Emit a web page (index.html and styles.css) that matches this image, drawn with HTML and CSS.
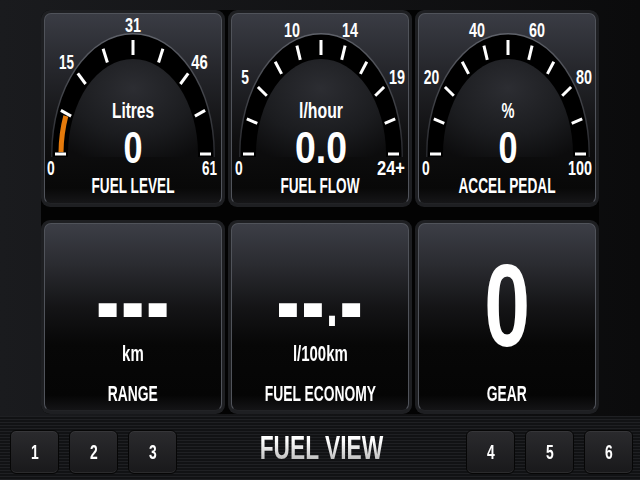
FILE: index.html
```html
<!DOCTYPE html>
<html>
  <head>
    <link rel="stylesheet" href="styles.css">
  </head>
  <body>
    <div class="grid">
      <!-- fuel level -->
      <div class="panel">
        <div class="face">
          <svg class="gauge" width="176" height="189" viewBox="-88 -140 176 189">
            <defs>
              <linearGradient id="rim" x1="0" y1="0" x2="0" y2="1">
                <stop offset="0" stop-color="#5f626a"/>
                <stop offset="1" stop-color="#26272b"/>
              </linearGradient>
              <radialGradient id="dome" cx="0.5" cy="0.3" r="0.8">
                <stop offset="0" stop-color="#2c2d32"/>
                <stop offset="0.6" stop-color="#1b1c1f"/>
                <stop offset="1" stop-color="#0c0c0d"/>
              </radialGradient>
            </defs>
            <path d="M-82 3V0A82 121 0 0 1 82 0V3Z" fill="url(#rim)"/>
            <path d="M-80.5 3V0A80.5 119.5 0 0 1 80.5 0V3Z" fill="#000"/>
            <path d="M-65 3V0A65 95 0 0 1 65 0V3Z" fill="url(#dome)"/>
            <path class="level" d="M-71.99 -1.85A72 106 0 0 1 -67.2 -38"/>
            <g class="ticks">
              <line x1="-67" y1="0" x2="-78" y2="0"/>
              <line x1="-61.9" y1="-37.9" x2="-72.1" y2="-43.6"/>
              <line x1="-47.4" y1="-70" x2="-55.2" y2="-80.6"/>
              <line x1="-25.6" y1="-91.5" x2="-29.9" y2="-105.3"/>
              <line x1="0" y1="-99" x2="0" y2="-114"/>
              <line x1="25.6" y1="-91.5" x2="29.9" y2="-105.3"/>
              <line x1="47.4" y1="-70" x2="55.2" y2="-80.6"/>
              <line x1="61.9" y1="-37.9" x2="72.1" y2="-43.6"/>
              <line x1="67" y1="0" x2="78" y2="0"/>
            </g>
            <g class="scale">
              <text x="-66.5" y="-85.5" textLength="15" lengthAdjust="spacingAndGlyphs">15</text>
              <text x="0" y="-122" textLength="16" lengthAdjust="spacingAndGlyphs">31</text>
              <text x="66.5" y="-85.5" textLength="16.5" lengthAdjust="spacingAndGlyphs">46</text>
              <text class="min" x="-86" y="21" textLength="7.7" lengthAdjust="spacingAndGlyphs">0</text>
              <text class="max" x="84" y="21" textLength="15" lengthAdjust="spacingAndGlyphs">61</text>
            </g>
            <text class="unit" y="-36" textLength="42" lengthAdjust="spacingAndGlyphs">Litres</text>
            <text class="value" y="9" textLength="19" lengthAdjust="spacingAndGlyphs">0</text>
            <text class="title" y="38.5" textLength="83" lengthAdjust="spacingAndGlyphs">FUEL LEVEL</text>
          </svg>
        </div>
      </div>
      <!-- fuel flow -->
      <div class="panel">
        <div class="face">
          <svg class="gauge" width="176" height="189" viewBox="-89 -140 176 189">
            <path d="M-82 3V0A82 121 0 0 1 82 0V3Z" fill="url(#rim)"/>
            <path d="M-80.5 3V0A80.5 119.5 0 0 1 80.5 0V3Z" fill="#000"/>
            <path d="M-65 3V0A65 95 0 0 1 65 0V3Z" fill="url(#dome)"/>
            <g class="ticks">
              <line x1="-67" y1="0" x2="-78" y2="0"/>
              <line x1="-63.7" y1="-30.6" x2="-74.2" y2="-35.2"/>
              <line x1="-54.2" y1="-58.2" x2="-63.1" y2="-67"/>
              <line x1="-39.4" y1="-80.1" x2="-45.8" y2="-92.2"/>
              <line x1="-20.7" y1="-94.2" x2="-24.1" y2="-108.4"/>
              <line x1="0" y1="-99" x2="0" y2="-114"/>
              <line x1="20.7" y1="-94.2" x2="24.1" y2="-108.4"/>
              <line x1="39.4" y1="-80.1" x2="45.8" y2="-92.2"/>
              <line x1="54.2" y1="-58.2" x2="63.1" y2="-67"/>
              <line x1="63.7" y1="-30.6" x2="74.2" y2="-35.2"/>
              <line x1="67" y1="0" x2="78" y2="0"/>
            </g>
            <g class="scale">
              <text x="-76" y="-70" textLength="7.7" lengthAdjust="spacingAndGlyphs">5</text>
              <text x="-29" y="-117.5" textLength="16" lengthAdjust="spacingAndGlyphs">10</text>
              <text x="29" y="-117.5" textLength="16" lengthAdjust="spacingAndGlyphs">14</text>
              <text x="76" y="-70" textLength="16" lengthAdjust="spacingAndGlyphs">19</text>
              <text class="min" x="-86" y="21" textLength="7.7" lengthAdjust="spacingAndGlyphs">0</text>
              <text class="max" x="84" y="21" textLength="28" lengthAdjust="spacingAndGlyphs">24+</text>
            </g>
            <text class="unit" y="-36" textLength="44" lengthAdjust="spacingAndGlyphs">l/hour</text>
            <text class="value" y="9" textLength="52" lengthAdjust="spacingAndGlyphs">0.0</text>
            <text class="title" x="-1" y="38.5" textLength="79" lengthAdjust="spacingAndGlyphs">FUEL FLOW</text>
          </svg>
        </div>
      </div>
      <!-- accel pedal -->
      <div class="panel">
        <div class="face">
          <svg class="gauge" width="176" height="189" viewBox="-89 -140 176 189">
            <path d="M-82 3V0A82 121 0 0 1 82 0V3Z" fill="url(#rim)"/>
            <path d="M-80.5 3V0A80.5 119.5 0 0 1 80.5 0V3Z" fill="#000"/>
            <path d="M-65 3V0A65 95 0 0 1 65 0V3Z" fill="url(#dome)"/>
            <g class="ticks">
              <line x1="-67" y1="0" x2="-78" y2="0"/>
              <line x1="-63.7" y1="-30.6" x2="-74.2" y2="-35.2"/>
              <line x1="-54.2" y1="-58.2" x2="-63.1" y2="-67"/>
              <line x1="-39.4" y1="-80.1" x2="-45.8" y2="-92.2"/>
              <line x1="-20.7" y1="-94.2" x2="-24.1" y2="-108.4"/>
              <line x1="0" y1="-99" x2="0" y2="-114"/>
              <line x1="20.7" y1="-94.2" x2="24.1" y2="-108.4"/>
              <line x1="39.4" y1="-80.1" x2="45.8" y2="-92.2"/>
              <line x1="54.2" y1="-58.2" x2="63.1" y2="-67"/>
              <line x1="63.7" y1="-30.6" x2="74.2" y2="-35.2"/>
              <line x1="67" y1="0" x2="78" y2="0"/>
            </g>
            <g class="scale">
              <text x="-76.5" y="-70" textLength="15.5" lengthAdjust="spacingAndGlyphs">20</text>
              <text x="-31" y="-117.5" textLength="16" lengthAdjust="spacingAndGlyphs">40</text>
              <text x="29" y="-117.5" textLength="16" lengthAdjust="spacingAndGlyphs">60</text>
              <text x="76" y="-70" textLength="16" lengthAdjust="spacingAndGlyphs">80</text>
              <text class="min" x="-86" y="21" textLength="7.7" lengthAdjust="spacingAndGlyphs">0</text>
              <text class="max" x="84" y="21" textLength="24" lengthAdjust="spacingAndGlyphs">100</text>
            </g>
            <text class="unit" y="-36" textLength="13" lengthAdjust="spacingAndGlyphs">%</text>
            <text class="value" y="9" textLength="19" lengthAdjust="spacingAndGlyphs">0</text>
            <text class="title" x="-1" y="38.5" textLength="97" lengthAdjust="spacingAndGlyphs">ACCEL PEDAL</text>
          </svg>
        </div>
      </div>

      <div class="panel">
        <div class="face tile">
          <div class="tile-value dashes">---</div>
          <div class="tile-unit">km</div>
          <div class="tile-title">RANGE</div>
        </div>
      </div>
      <div class="panel">
        <div class="face tile">
          <div class="tile-value dashes">--<span class="dot">.</span>-</div>
          <div class="tile-unit">l/100km</div>
          <div class="tile-title">FUEL ECONOMY</div>
        </div>
      </div>
      <div class="panel">
        <div class="face tile">
          <div class="tile-value gear">0</div>
          <div class="tile-title">GEAR</div>
        </div>
      </div>
    </div>

    <div class="bar">
      <div class="keys">
        <button class="key"><span>1</span></button>
        <button class="key"><span>2</span></button>
        <button class="key"><span>3</span></button>
      </div>
      <div class="bar-title">FUEL VIEW</div>
      <div class="keys">
        <button class="key"><span>4</span></button>
        <button class="key"><span>5</span></button>
        <button class="key"><span>6</span></button>
      </div>
    </div>
  </body>
</html>
```

FILE: styles.css
```css
/* dashboard screen */
body {
  margin: 0;
  width: 640px;
  height: 480px;
  overflow: hidden;
  background: linear-gradient(90deg, #1a1b1e, #0b0b0c);
  font-family: "Liberation Sans", sans-serif;
  font-weight: bold;
  color: #fff;
  white-space: nowrap;
}
.grid {
  display: grid;
  grid-template-columns: repeat(3, 184px);
  grid-template-rows: 197px 194px;
  column-gap: 3px;
  row-gap: 13px;
  width: 558px;
  margin: 10px 0 0 41px;
  background: #030303;
  border-radius: 9px;
}
.panel {
  background: #1e1f22;
  border-radius: 9px;
  padding: 3px;
}
.face {
  box-sizing: border-box;
  height: 100%;
  border: 1px solid #50535a;
  border-bottom-color: #222326;
  border-radius: 7px;
  background: linear-gradient(180deg, #3a3c44 0%, #25262b 30%, #0e0e0f 68%, #080808 92%, #161618 100%);
  overflow: hidden;
}
.gauge {
  display: block;
}
.gauge text {
  font-family: "Liberation Sans", sans-serif;
  font-weight: bold;
  fill: #fff;
  text-anchor: middle;
}
.ticks {
  stroke: #fff;
  stroke-width: 3;
}
.level {
  fill: none;
  stroke: #e57a0b;
  stroke-width: 5;
}
.scale text {
  font-size: 20px;
}
.scale .min {
  text-anchor: start;
}
.scale .max {
  text-anchor: end;
}
.gauge .unit,
.gauge .title {
  font-size: 22px;
}
.gauge .value {
  font-size: 44px;
}

/* value tiles */
.tile {
  display: flex;
  flex-direction: column;
  align-items: center;
  padding-top: 60px;
  background: linear-gradient(180deg, #3c3e46 0%, #2a2b30 22%, #141416 45%, #070707 65%, #050505 92%, #141416 100%);
}
.tile-value {
  height: 45px;
  line-height: 45px;
}
.dashes {
  font-size: 115px;
  line-height: 32px;
  letter-spacing: 2.7px;
  transform: scaleX(0.61);
}
.dot {
  font-size: 68px;
  vertical-align: 14px;
}
.gear {
  font-size: 116px;
  transform: scaleX(0.71);
}
.tile-unit {
  margin-top: 14px;
  font-size: 22px;
  line-height: 22px;
  transform: scaleX(0.68);
}
.tile-title {
  margin-top: auto;
  margin-bottom: 5px;
  font-size: 22px;
  line-height: 22px;
  transform: scaleX(0.63);
}

/* soft key bar */
.bar {
  display: flex;
  align-items: flex-start;
  box-sizing: border-box;
  height: 64px;
  margin-top: 2px;
  padding: 14px 7px 0 10px;
  background: repeating-linear-gradient(180deg, #1f2023 0 1px, #111214 1px 3px);
}
.keys {
  display: flex;
  gap: 10px;
}
.key {
  width: 49px;
  height: 44px;
  padding: 0;
  border: 1px solid #060606;
  border-radius: 6px;
  background: linear-gradient(180deg, #2a2a2d, #19191b);
  box-shadow: inset 0 1px 0 rgba(255, 255, 255, 0.06), inset 0 -1px 0 rgba(255, 255, 255, 0.08);
  color: #fff;
  font-family: inherit;
  font-weight: bold;
  font-size: 21px;
  line-height: 42px;
}
.key span {
  display: inline-block;
  transform: scaleX(0.66);
}
.bar-title {
  flex: 1;
  text-align: center;
  font-size: 33px;
  line-height: 36px;
  color: #e8e8e8;
  background: linear-gradient(180deg, #ffffff 30%, #a9a9a9);
  -webkit-background-clip: text;
  background-clip: text;
  -webkit-text-fill-color: transparent;
  transform: scaleX(0.69);
}
```
